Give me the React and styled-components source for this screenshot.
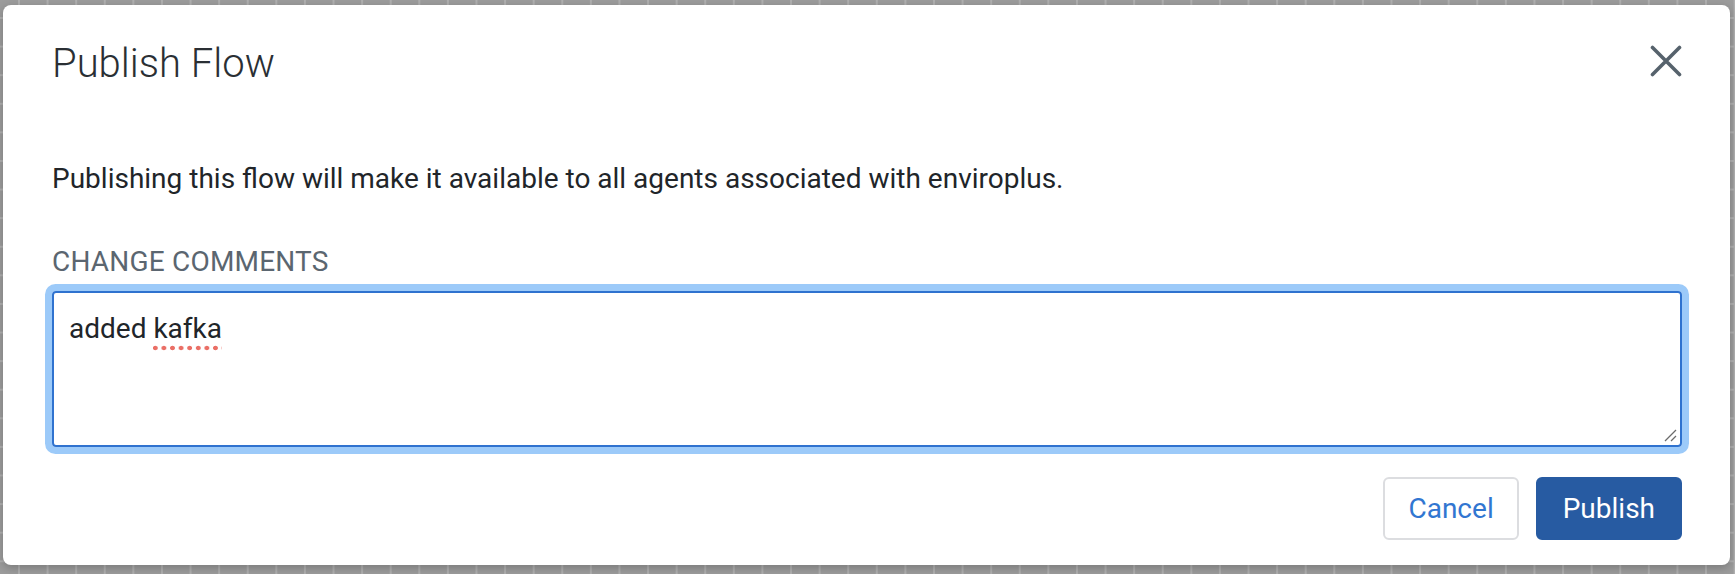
import React from "react";
import styled, { createGlobalStyle } from "styled-components";

const GlobalStyle = createGlobalStyle`
  html, body {
    margin: 0;
    padding: 0;
  }
  body {
    font-family: Roboto, "Liberation Sans", sans-serif;
    background-color: #9c9c9c;
    background-image:
      linear-gradient(to right, #b0b0b0 2px, transparent 2px),
      linear-gradient(to bottom, #b0b0b0 2px, transparent 2px);
    background-size: 28.6px 28.6px;
    background-position: 18px 17px;
    overflow: hidden;
  }
`;

const Stage = styled.div`
  width: 1735px;
  height: 574px;
  box-sizing: border-box;
  padding: 5px 5px 9px 3px;
`;

const Modal = styled.div`
  box-sizing: border-box;
  height: 560px;
  background: #ffffff;
  border-radius: 8px;
  box-shadow: 0 3px 10px rgba(0, 0, 0, 0.22);
  padding: 36px 48px 25px 49px;
  display: flex;
  flex-direction: column;
`;

const Header = styled.div`
  display: flex;
  justify-content: space-between;
  align-items: flex-start;
`;

const Title = styled.h2`
  margin: 0;
  font-size: 40px;
  line-height: 46px;
  font-weight: 300;
  color: #2a2f34;
`;

const CloseButton = styled.button`
  margin-top: 4px;
  width: 32px;
  height: 32px;
  padding: 0;
  border: none;
  background: none;
  cursor: pointer;
  display: flex;
`;

const Message = styled.p`
  margin: 76px 0 0;
  font-size: 28px;
  line-height: 32px;
  color: #212529;
`;

const Label = styled.label`
  margin-top: 51px;
  font-size: 28px;
  line-height: 32px;
  letter-spacing: 0.2px;
  text-transform: uppercase;
  color: #5b6670;
`;

const Field = styled.div`
  position: relative;
  margin-top: 13px;
  height: 157px;
  box-sizing: border-box;
  border: 2px solid #2f72cf;
  border-radius: 4px;
  box-shadow: 0 0 0 7px #9ccaf9;
  padding: 20px 16px 0 15px;
  font-size: 28px;
  line-height: 32px;
  color: #212529;
`;

const Misspelled = styled.span`
  background-image: radial-gradient(circle, #ea6f66 2.1px, transparent 2.6px);
  background-repeat: repeat-x;
  background-size: 8.6px 6px;
  background-position: -2px 33px;
  padding-bottom: 6px;
`;

const Grip = styled.svg`
  position: absolute;
  right: 2px;
  bottom: 2px;
`;

const Footer = styled.div`
  margin-top: 30px;
  display: flex;
  justify-content: flex-end;
  gap: 17px;
`;

const Button = styled.button`
  height: 63px;
  box-sizing: border-box;
  padding: 0 ${(p) => (p.primary ? "25px" : "23px")};
  border-radius: 6px;
  font-family: Roboto, "Liberation Sans", sans-serif;
  font-size: 28px;
  cursor: pointer;
  border: 2px solid ${(p) => (p.primary ? "#275ba2" : "#dcdde0")};
  background: ${(p) => (p.primary ? "#275ba2" : "#ffffff")};
  color: ${(p) => (p.primary ? "#ffffff" : "#3176d1")};
`;

export default function App() {
  return (
    <Stage>
      <GlobalStyle />
      <Modal>
        <Header>
          <Title>Publish Flow</Title>
          <CloseButton aria-label="Close">
            <svg width="32" height="32" viewBox="0 0 32 32">
              <path
                d="M2.5 2.5 L29.5 29.5 M29.5 2.5 L2.5 29.5"
                stroke="#56626c"
                strokeWidth="3.6"
                strokeLinecap="round"
              />
            </svg>
          </CloseButton>
        </Header>
        <Message>
          Publishing this flow will make it available to all agents associated
          with enviroplus.
        </Message>
        <Label>Change Comments</Label>
        <Field role="textbox">
          added <Misspelled>kafka</Misspelled>
          <Grip width="16" height="16" viewBox="0 0 16 16">
            <path
              d="M3 14 L14 3 M9 14 L14 9"
              stroke="#6b6b6b"
              strokeWidth="1.3"
            />
          </Grip>
        </Field>
        <Footer>
          <Button>Cancel</Button>
          <Button primary>Publish</Button>
        </Footer>
      </Modal>
    </Stage>
  );
}
